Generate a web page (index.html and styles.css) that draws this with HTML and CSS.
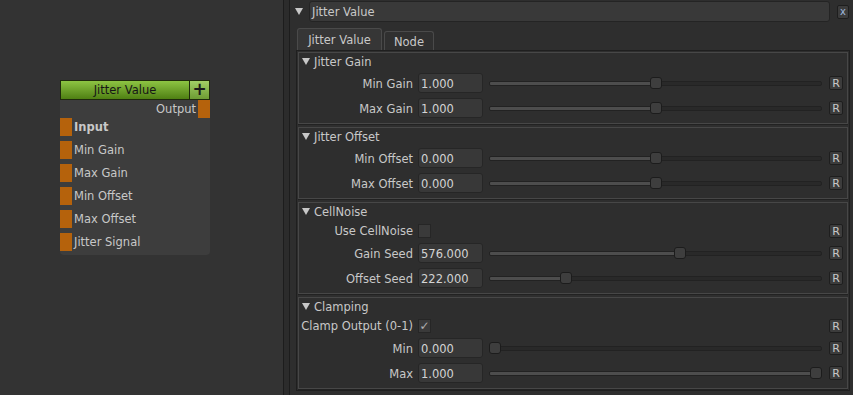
FILE: index.html
```html
<!DOCTYPE html>
<html lang="en">
<head>
    <meta charset="UTF-8">
    <title>Jitter Value</title>
    <link rel="stylesheet" href="styles.css">
</head>
<body>
    <div class="graph">
        <div class="node">
            <div class="node-head">
                <div class="node-title">Jitter Value</div>
                <div class="node-add">+</div>
            </div>
            <div class="node-body">
                <div class="out-row"><span class="out-label">Output</span><span class="port"></span></div>
                <div class="in-row"><span class="port"></span><span class="in-label bold">Input</span></div>
                <div class="in-row"><span class="port"></span><span class="in-label">Min Gain</span></div>
                <div class="in-row"><span class="port"></span><span class="in-label">Max Gain</span></div>
                <div class="in-row"><span class="port"></span><span class="in-label">Min Offset</span></div>
                <div class="in-row"><span class="port"></span><span class="in-label">Max Offset</span></div>
                <div class="in-row"><span class="port"></span><span class="in-label">Jitter Signal</span></div>
            </div>
        </div>
    </div>
    <div class="splitter"></div>
    <div class="panel">
        <div class="panel-head">
            <span class="tri"></span>
            <div class="title-box">Jitter Value</div>
            <div class="close">x</div>
        </div>
        <div class="tabs">
            <div class="tab active">Jitter Value</div>
            <div class="tab">Node</div>
        </div>
        <div class="frame">
            <div class="group">
                <div class="group-head"><span class="tri"></span>Jitter Gain</div>
                <div class="row">
                    <span class="lbl">Min Gain</span><span class="num">1.000</span>
                    <div class="slider" style="--v: 0.5"><div class="track"><div class="fill"></div></div><div class="handle"></div></div>
                    <span class="reset">R</span>
                </div>
                <div class="row">
                    <span class="lbl">Max Gain</span><span class="num">1.000</span>
                    <div class="slider" style="--v: 0.5"><div class="track"><div class="fill"></div></div><div class="handle"></div></div>
                    <span class="reset">R</span>
                </div>
            </div>
            <div class="group">
                <div class="group-head"><span class="tri"></span>Jitter Offset</div>
                <div class="row">
                    <span class="lbl">Min Offset</span><span class="num">0.000</span>
                    <div class="slider" style="--v: 0.5"><div class="track"><div class="fill"></div></div><div class="handle"></div></div>
                    <span class="reset">R</span>
                </div>
                <div class="row">
                    <span class="lbl">Max Offset</span><span class="num">0.000</span>
                    <div class="slider" style="--v: 0.5"><div class="track"><div class="fill"></div></div><div class="handle"></div></div>
                    <span class="reset">R</span>
                </div>
            </div>
            <div class="group">
                <div class="group-head"><span class="tri"></span>CellNoise</div>
                <div class="row check-row">
                    <span class="lbl">Use CellNoise</span><span class="check"></span>
                    <span class="spacer"></span>
                    <span class="reset">R</span>
                </div>
                <div class="row">
                    <span class="lbl">Gain Seed</span><span class="num">576.000</span>
                    <div class="slider" style="--v: 0.576"><div class="track"><div class="fill"></div></div><div class="handle"></div></div>
                    <span class="reset">R</span>
                </div>
                <div class="row">
                    <span class="lbl">Offset Seed</span><span class="num">222.000</span>
                    <div class="slider" style="--v: 0.222"><div class="track"><div class="fill"></div></div><div class="handle"></div></div>
                    <span class="reset">R</span>
                </div>
            </div>
            <div class="group">
                <div class="group-head"><span class="tri"></span>Clamping</div>
                <div class="row check-row">
                    <span class="lbl">Clamp Output (0-1)</span><span class="check">&#10003;</span>
                    <span class="spacer"></span>
                    <span class="reset">R</span>
                </div>
                <div class="row">
                    <span class="lbl">Min</span><span class="num">0.000</span>
                    <div class="slider" style="--v: 0"><div class="track"><div class="fill"></div></div><div class="handle"></div></div>
                    <span class="reset">R</span>
                </div>
                <div class="row">
                    <span class="lbl">Max</span><span class="num">1.000</span>
                    <div class="slider" style="--v: 1"><div class="track"><div class="fill"></div></div><div class="handle"></div></div>
                    <span class="reset">R</span>
                </div>
            </div>
        </div>
    </div>
</body>
</html>
```

FILE: styles.css
```css
body {
    margin: 0;
    height: 395px;
    overflow: hidden;
    display: flex;
    background: #333333;
    font-family: "DejaVu Sans", sans-serif;
    font-size: 11.5px;
    color: #c8c8c8;
}

/* node graph */
.graph {
    width: 283px;
    position: relative;
    background: #333333;
}
.node {
    position: absolute;
    left: 60px;
    top: 80px;
    width: 150px;
}
.node-head {
    display: flex;
    height: 20px;
}
.node-title {
    flex: 1;
    box-sizing: border-box;
    background: linear-gradient(#8dc443, #4f8013);
    border: 1px solid #1f2a0c;
    color: #161616;
    text-align: center;
    line-height: 19px;
}
.node-add {
    width: 20px;
    box-sizing: border-box;
    background: linear-gradient(#a2cf66, #6d9c33);
    border: 1px solid #1f2a0c;
    border-left: none;
    color: #1a1a1a;
    font-weight: bold;
    font-size: 17px;
    text-align: center;
    line-height: 17px;
}
.node-body {
    height: 155px;
    background: #3d3d3d;
    border-radius: 0 0 4px 4px;
}
.port {
    width: 12px;
    height: 18px;
    background: #b5620c;
}
.out-row {
    display: flex;
    justify-content: flex-end;
    align-items: center;
    height: 18px;
}
.out-label {
    margin-right: 2px;
}
.in-row {
    display: flex;
    align-items: center;
    height: 18px;
    margin-top: 5px;
}
.out-row + .in-row {
    margin-top: 0;
}
.in-label {
    margin-left: 2px;
}
.bold {
    font-weight: bold;
}

.splitter {
    width: 5px;
    background: #2c2c2c;
    border-left: 1px solid #1d1d1d;
    border-right: 1px solid #1d1d1d;
}

/* properties panel */
.panel {
    flex: 1;
    display: flex;
    flex-direction: column;
    background: #2e2e2e;
    padding: 1px 3px 0 5px;
}
.tri {
    width: 0;
    height: 0;
    border-left: 4px solid transparent;
    border-right: 4px solid transparent;
    border-top: 7px solid #c8c8c8;
}
.panel-head {
    display: flex;
    align-items: center;
    height: 21px;
}
.panel-head .tri {
    margin-right: 6px;
}
.title-box {
    flex: 1;
    height: 21px;
    box-sizing: border-box;
    background: #393939;
    border: 1px solid #242424;
    border-radius: 3px;
    padding-left: 2px;
    line-height: 20px;
}
.close {
    width: 12px;
    height: 14px;
    box-sizing: border-box;
    margin: 0 1px 0 7px;
    background: #3c3c3c;
    border: 1px solid #1e1e1e;
    border-radius: 2px;
    color: #9fb8dc;
    font-size: 10px;
    line-height: 11px;
    text-align: center;
}
.tabs {
    display: flex;
    align-items: flex-end;
    gap: 2px;
    margin-top: 6px;
    padding-left: 2px;
}
.tab {
    height: 19px;
    width: 50px;
    box-sizing: border-box;
    background: #303030;
    border: 1px solid #4a4a4a;
    border-bottom: none;
    border-radius: 3px 3px 0 0;
    text-align: center;
    line-height: 20px;
}
.tab.active {
    height: 22px;
    width: 85px;
    background: #363636;
    line-height: 23px;
}
.frame {
    display: flex;
    flex-direction: column;
    gap: 3px;
    margin: 0 0 5px 1px;
    padding: 1px;
    flex: 1;
    border: 1px solid #1f1f1f;
}
.group {
    border: 1px solid #474747;
    box-shadow: 0 1px 0 #222222;
    padding: 0 4px 5px 0;
}
.group-head {
    display: flex;
    align-items: center;
    height: 17px;
    padding-left: 3px;
}
.group-head .tri {
    margin-right: 4px;
}
.row {
    display: flex;
    align-items: center;
    height: 20px;
    margin-top: 5px;
}
.group-head + .row {
    margin-top: 3px;
}
.check-row {
    height: 15px;
}
.lbl {
    width: 114px;
    text-align: right;
    white-space: nowrap;
    padding-top: 1px;
}
.num {
    width: 65px;
    height: 20px;
    box-sizing: border-box;
    margin-left: 5px;
    background: #383838;
    border: 1px solid #262626;
    border-radius: 3px;
    padding-left: 2px;
    line-height: 20px;
    color: #d4d4d4;
}
.check {
    width: 13px;
    height: 14px;
    box-sizing: border-box;
    margin-left: 5px;
    background: #3a3a3a;
    border: 1px solid #262626;
    color: #b0b0b0;
    font-size: 12px;
    line-height: 12px;
    text-align: center;
}
.spacer {
    flex: 1;
}
.slider {
    flex: 1;
    position: relative;
    height: 12px;
    margin: 0 7px 0 6px;
}
.track {
    position: absolute;
    left: 0;
    right: 0;
    top: 4px;
    height: 5px;
    box-sizing: border-box;
    background: #292929;
    border: 1px solid #222222;
    border-radius: 2px;
    overflow: hidden;
}
.fill {
    width: calc((100% - 12px) * var(--v) + 6px);
    height: 100%;
    background: #4d4d4d;
}
.handle {
    position: absolute;
    top: 0;
    left: calc((100% - 12px) * var(--v));
    width: 12px;
    height: 12px;
    box-sizing: border-box;
    background: #3e3e3e;
    border: 1px solid #1c1c1c;
    border-radius: 3px;
}
.reset {
    width: 14px;
    height: 14px;
    box-sizing: border-box;
    background: #3c3c3c;
    border: 1px solid #1e1e1e;
    border-radius: 2px;
    font-size: 11px;
    line-height: 13px;
    text-align: center;
}
```
